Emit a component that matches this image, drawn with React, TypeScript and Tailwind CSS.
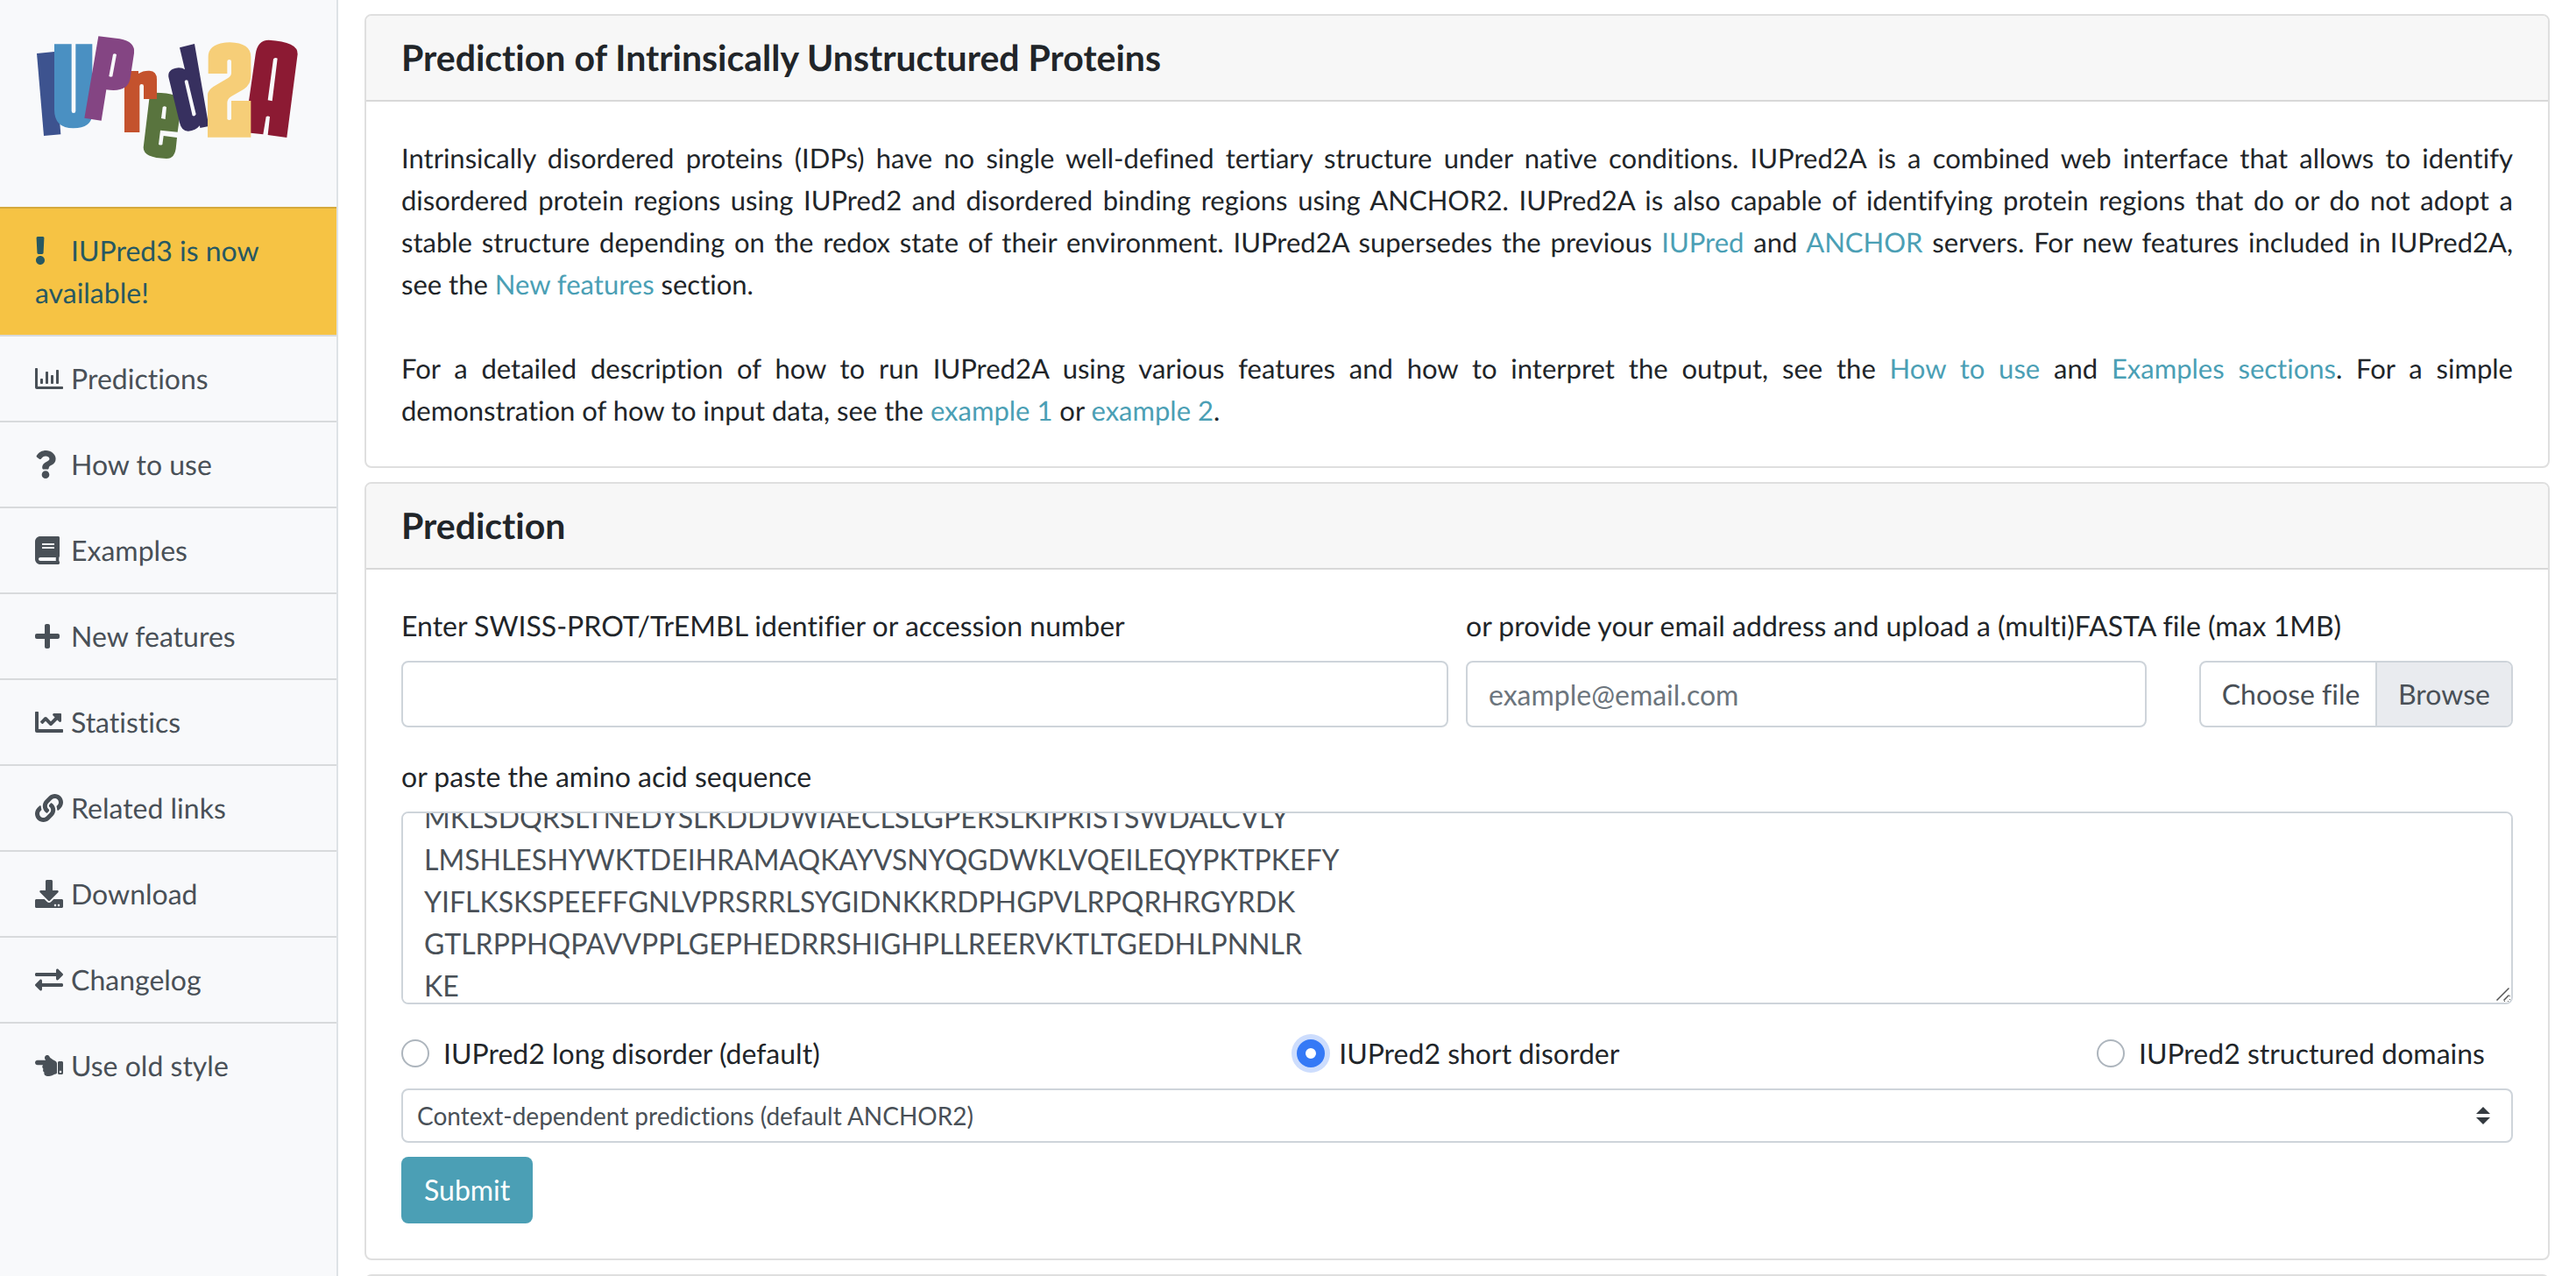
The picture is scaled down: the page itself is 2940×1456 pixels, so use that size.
import { useEffect, useRef, useState } from "react";
import type { ReactNode } from "react";
import type { IconType } from "react-icons";
import {
  FaBook,
  FaChartLine,
  FaDownload,
  FaExchangeAlt,
  FaExclamation,
  FaHandPointLeft,
  FaLink,
  FaPlus,
  FaQuestion,
  FaRegChartBar,
} from "react-icons/fa";

const MENU: { label: string; Icon: IconType; highlight?: boolean }[] = [
  { label: "IUPred3 is now available!", Icon: FaExclamation, highlight: true },
  { label: "Predictions", Icon: FaRegChartBar },
  { label: "How to use", Icon: FaQuestion },
  { label: "Examples", Icon: FaBook },
  { label: "New features", Icon: FaPlus },
  { label: "Statistics", Icon: FaChartLine },
  { label: "Related links", Icon: FaLink },
  { label: "Download", Icon: FaDownload },
  { label: "Changelog", Icon: FaExchangeAlt },
  { label: "Use old style", Icon: FaHandPointLeft },
];

const SEQUENCE = [
  "MKLSDQRSLTNEDYSLKDDDWIAECLSLGPERSLKIPRISTSWDALCVLY",
  "LMSHLESHYWKTDEIHRAMAQKAYVSNYQGDWKLVQEILEQYPKTPKEFY",
  "YIFLKSKSPEEFFGNLVPRSRRLSYGIDNKKRDPHGPVLRPQRHRGYRDK",
  "GTLRPPHQPAVVPPLGEPHEDRRSHIGHPLLREERVKTLTGEDHLPNNLR",
  "KE",
].join("\n");

const MODES = ["IUPred2 long disorder (default)", "IUPred2 short disorder", "IUPred2 structured domains"];

function Logo() {
  return (
    <svg viewBox="120 120 906 429" className="block h-[143px] w-[302px]" role="img" aria-label="IUPred2A" fillRule="evenodd">
      <path fill="#3d538f" d="M126 183L186 177L208 460L150 465Z" />
      <path fill="#4a90c2" d="M186 151H245V380Q245 387 252 387Q259 387 259 380V151H316V390Q314 439 251 439Q186 439 186 375Z" />
      <path
        fill="#59743e"
        d="M511 339L530 317Q620 318 622 350L608 452L549 446L543 494Q549 499 556 495L560 465L606 471L603 500Q600 543 570 543Q491 541 491 505ZM557 367Q563 361 570 367L566 408L552 405Z"
      />
      <path fill="#c4522d" d="M426 243H474V252Q490 241 512 242Q537 243 537 272V339H492V295Q492 288 485 288Q478 288 478 295V453H426Z" />
      <path
        fill="#844583"
        d="M337 124L410 133Q464 143 459 182L446 268Q438 318 364 307L347 413L289 404ZM387 186Q393 181 399 187L385 262Q379 265 373 261Z"
      />
      <path
        fill="#37305f"
        d="M615 163L666 150L715 432L685 438L684 430Q670 447 645 449Q622 450 615 420L578 268Q570 236 612 232Q625 232 633 238ZM632 279Q634 271 643 275L671 391Q668 400 659 396Z"
      />
      <path
        fill="#8c1a33"
        d="M875 185Q882 137 920 137Q1021 143 1019 185L982 471L917 462L924 400Q917 395 911 400L901 460L858 455L852 346ZM936 202Q943 195 950 200L932 346L917 343Z"
      />
      <path
        fill="#f6ce78"
        d="M713 252V195Q713 147 787 145Q859 147 859 195V258Q859 290 835 305L792 330Q778 339 778 352V408Q785 414 792 408V345H859V470H711V325Q711 310 730 297L782 266Q792 260 792 250V210Q792 204 785 204Q778 204 778 210V252Z"
      />
    </svg>
  );
}

function Card({ title, children }: { title?: string; children?: ReactNode }) {
  return (
    <section className="shrink-0 overflow-hidden rounded-lg border-2 border-[#dfdfdf] bg-white">
      <h5 className="min-h-24 border-b-2 border-[#d8d8d8] bg-[#f7f7f7] px-10 py-6 text-[41px] leading-[48px] font-bold">
        {title}
      </h5>
      <div className="p-10">{children}</div>
    </section>
  );
}

function A({ children }: { children: ReactNode }) {
  return (
    <a href="#" className="text-[#4b9fb5] hover:underline">
      {children}
    </a>
  );
}

function Sidebar() {
  return (
    <aside className="flex w-[386px] shrink-0 flex-col border-r-2 border-[#dee2e6] bg-[#f8f9fb]">
      <div className="flex h-[236px] shrink-0 px-10 pt-10">
        <Logo />
      </div>
      <nav className="flex flex-col">
        {MENU.map(({ label, Icon, highlight }) => (
          <a
            key={label}
            href="#"
            className={
              highlight
                ? "border-t-2 border-[#d5a93b] bg-[#f6c344] px-10 py-6 text-[#275862]"
                : "border-t-2 border-[#d8dadc] px-10 py-6 text-[#495057]"
            }
          >
            <span className="inline-block w-[41px]">
              <Icon className="inline size-8 align-[-4px]" preserveAspectRatio="xMinYMid meet" />
            </span>
            {label}
          </a>
        ))}
      </nav>
    </aside>
  );
}

function PredictionForm() {
  const [mode, setMode] = useState(1);
  const area = useRef<HTMLTextAreaElement>(null);

  useEffect(() => {
    if (area.current) area.current.scrollTop = 31;
  }, []);

  return (
    <form onSubmit={(e) => e.preventDefault()}>
      <div className="grid grid-cols-2 gap-5">
        <div>
          <label htmlFor="accession" className="mb-4 block">
            Enter SWISS-PROT/TrEMBL identifier or accession number
          </label>
          <input
            id="accession"
            type="text"
            className="block h-[76px] w-full rounded-lg border-2 border-[#ced4da] bg-white px-6 text-[#495057]"
          />
        </div>
        <div>
          <label htmlFor="email" className="mb-4 block">
            or provide your email address and upload a (multi)FASTA file (max 1MB)
          </label>
          <div className="grid grid-cols-3 gap-[60px]">
            <input
              id="email"
              type="email"
              placeholder="example@email.com"
              className="col-span-2 block h-[76px] w-full rounded-lg border-2 border-[#ced4da] bg-white px-6 text-[#495057] placeholder:text-[#6c757d]"
            />
            <label className="flex h-[76px] items-stretch overflow-hidden rounded-lg border-2 border-[#ced4da] text-[#495057]">
              <input type="file" className="sr-only" />
              <span className="min-w-0 grow overflow-hidden py-3 pl-6 whitespace-nowrap">Choose file</span>
              <span className="border-l-2 border-[#ced4da] bg-[#e9ebef] px-6 py-3">Browse</span>
            </label>
          </div>
        </div>
      </div>

      <label htmlFor="sequence" className="mt-8 mb-4 block">
        or paste the amino acid sequence
      </label>
      <div className="relative">
        <textarea
          id="sequence"
          ref={area}
          rows={4}
          spellCheck={false}
          defaultValue={SEQUENCE}
          className="block h-[220px] w-full resize-y rounded-lg border-2 border-[#ced4da] bg-white px-6 py-3 text-[#495057] [scrollbar-width:none]"
        />
        <svg
          viewBox="0 0 16 16"
          className="pointer-events-none absolute right-1 bottom-1 size-4 bg-white"
          fill="none"
          stroke="#555"
          strokeWidth="1.5"
          aria-hidden="true"
        >
          <path d="M1.500 15.500L15.500 1.500M9.500 15.500L15.500 9.500" />
        </svg>
      </div>

      <div className="mt-8 flex justify-between">
        {MODES.map((name, i) => (
          <label key={name} className="mr-8 flex items-center gap-4">
            <input
              type="radio"
              name="mode"
              checked={mode === i}
              onChange={() => setMode(i)}
              className="size-8 appearance-none rounded-full border-2 border-[#adb5bd] bg-white checked:border-[10px] checked:border-[#3579f6] checked:ring-6 checked:ring-[#cdddfd]"
            />
            {name}
          </label>
        ))}
      </div>

      <div className="relative mt-4">
        <select
          aria-label="Prediction type"
          className="block h-[62px] w-full appearance-none rounded-lg border-2 border-[#ced4da] bg-white pr-14 pl-4 text-[28px] leading-[42px] text-[#495057]"
        >
          <option>Context-dependent predictions (default ANCHOR2)</option>
        </select>
        <svg viewBox="0 0 4 5" className="pointer-events-none absolute top-[21px] right-[26px] h-5 w-4" aria-hidden="true">
          <path fill="#343a40" d="M2 0L0 2h4zm0 5L0 3h4z" />
        </svg>
      </div>

      <button type="submit" className="mt-4 block h-[76px] rounded-lg bg-[#4b9fb5] px-[26px] text-white">
        Submit
      </button>
    </form>
  );
}

export default function App() {
  return (
    <div className="flex h-screen overflow-hidden bg-white font-['Lato',sans-serif] text-[32px] leading-[48px] text-[#212529] [font-variant-ligatures:no-common-ligatures] [text-rendering:geometricPrecision]">
      <Sidebar />
      <main className="flex min-w-0 grow flex-col gap-4 overflow-hidden pt-4 pr-[30px] pl-[30px]">
        <Card title="Prediction of Intrinsically Unstructured Proteins">
          <p className="text-justify text-[31px] leading-[48px]">
            Intrinsically disordered proteins (IDPs) have no single well-defined tertiary structure under native
            conditions. IUPred2A is a combined web interface that allows to identify disordered protein regions using
            IUPred2 and disordered binding regions using ANCHOR2. IUPred2A is also capable of identifying protein
            regions that do or do not adopt a{" "}
            <span className="whitespace-nowrap">stable structure</span> depending on the redox state of their
            environment. IUPred2A supersedes the previous <A>IUPred</A> and <A>ANCHOR</A> servers. For new features
            included in IUPred2A, <span className="whitespace-nowrap">see the</span> <A>New features</A> section.
          </p>
          <p className="mt-12 text-justify text-[31px] leading-[48px]">
            For a detailed description of how to run IUPred2A using various features and how to interpret the output,
            see the <A>How to use</A> and <A>Examples sections</A>. For a simple{" "}
            <span className="whitespace-nowrap">demonstration of how</span> to input data, see the <A>example 1</A> or{" "}
            <A>example 2</A>.
          </p>
        </Card>
        <Card title="Prediction">
          <PredictionForm />
        </Card>
        <Card />
      </main>
    </div>
  );
}
